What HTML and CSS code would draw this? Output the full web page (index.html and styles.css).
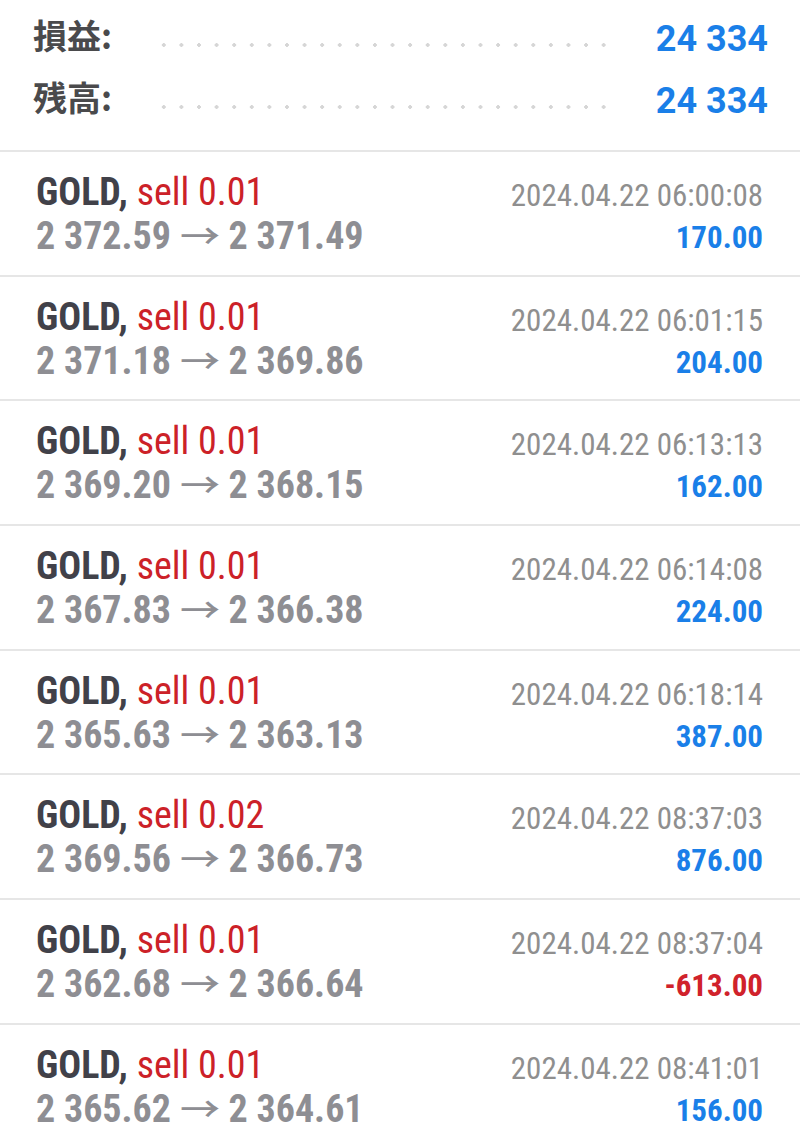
FILE: index.html
```html
<!DOCTYPE html>
<html lang="ja">
<head>
    <meta charset="UTF-8">
    <meta name="viewport" content="width=device-width, initial-scale=1.0">
    <title>取引履歴</title>
    <link rel="stylesheet" href="styles.css">
</head>
<body>

    <div class="summary">
        <div class="summary-row">
            <span class="summary-label">損益:</span>
            <span class="leader"></span>
            <span class="summary-value">24 334</span>
        </div>
        <div class="summary-row">
            <span class="summary-label">残高:</span>
            <span class="leader"></span>
            <span class="summary-value">24 334</span>
        </div>
    </div>

    <div class="deals" id="deals"></div>

    <script>
        const deals = [
            { vol: '0.01', open: '2 372.59', close: '2 371.49', time: '2024.04.22 06:00:08', profit: '170.00' },
            { vol: '0.01', open: '2 371.18', close: '2 369.86', time: '2024.04.22 06:01:15', profit: '204.00' },
            { vol: '0.01', open: '2 369.20', close: '2 368.15', time: '2024.04.22 06:13:13', profit: '162.00' },
            { vol: '0.01', open: '2 367.83', close: '2 366.38', time: '2024.04.22 06:14:08', profit: '224.00' },
            { vol: '0.01', open: '2 365.63', close: '2 363.13', time: '2024.04.22 06:18:14', profit: '387.00' },
            { vol: '0.02', open: '2 369.56', close: '2 366.73', time: '2024.04.22 08:37:03', profit: '876.00' },
            { vol: '0.01', open: '2 362.68', close: '2 366.64', time: '2024.04.22 08:37:04', profit: '-613.00' },
            { vol: '0.01', open: '2 365.62', close: '2 364.61', time: '2024.04.22 08:41:01', profit: '156.00' }
        ];

        const list = document.getElementById('deals');
        deals.forEach((d) => {
            const loss = d.profit.startsWith('-');
            const row = document.createElement('div');
            row.className = 'deal';
            row.innerHTML = `
                <div class="deal-left">
                    <div class="deal-title"><span class="symbol">GOLD,</span> <span class="side">sell ${d.vol}</span></div>
                    <div class="deal-prices">${d.open} <span class="arrow">→</span> ${d.close}</div>
                </div>
                <div class="deal-right">
                    <div class="deal-time">${d.time}</div>
                    <div class="deal-profit${loss ? ' loss' : ''}">${d.profit}</div>
                </div>`;
            list.appendChild(row);
        });
    </script>

</body>
</html>
```

FILE: styles.css
```css
body {
    font-family: "Roboto Condensed", Roboto, "Noto Sans CJK JP", sans-serif;
    font-stretch: condensed;
    background-color: #fff;
    margin: 0;
    width: 800px;
    height: 1147px;
    overflow: hidden;
}
.summary {
    padding: 8px 32px 0 33px;
    height: 150px;
    box-sizing: border-box;
}
.summary-row {
    display: flex;
    align-items: flex-start;
    height: 62px;
}
.summary-label {
    font-family: "Noto Sans CJK JP", sans-serif;
    font-size: 34px;
    font-weight: 700;
    line-height: 54px;
    color: #4a4a4c;
    width: 122px;
    white-space: nowrap;
}
.leader {
    width: 462px;
    height: 4px;
    margin-top: 35px;
    background-image: radial-gradient(circle, #d6d6d6 1.6px, transparent 2.1px);
    background-size: 17.6px 4px;
    background-repeat: repeat-x;
}
.summary-value {
    margin-left: auto;
    font-family: Roboto, sans-serif;
    font-stretch: normal;
    font-size: 36px;
    font-weight: 700;
    line-height: 62px;
    color: #1a7fe8;
}
.deal {
    display: flex;
    justify-content: space-between;
    height: 124.7px;
    box-sizing: border-box;
    border-top: 2px solid #e6e6e6;
    padding: 18px 37px 0 36px;
}
.deal-left {
    font-size: 38px;
    line-height: 44px;
    white-space: nowrap;
}
.symbol {
    font-weight: 700;
    color: #414149;
}
.side {
    color: #cc2128;
}
.deal-prices {
    font-weight: 700;
    color: #8e8e93;
}
.arrow {
    display: inline-block;
    font-family: "Noto Sans CJK JP", sans-serif;
    font-weight: 500;
    font-size: 34px;
    line-height: 40px;
    margin: 0 3px;
    transform: scaleX(1.18);
}
.deal-right {
    text-align: right;
    font-size: 31px;
    line-height: 42px;
    padding-top: 5px;
    white-space: nowrap;
}
.deal-time {
    color: #8f8f8f;
}
.deal-profit {
    font-weight: 700;
    color: #1a7fe8;
}
.deal-profit.loss {
    color: #d0222b;
}
```
